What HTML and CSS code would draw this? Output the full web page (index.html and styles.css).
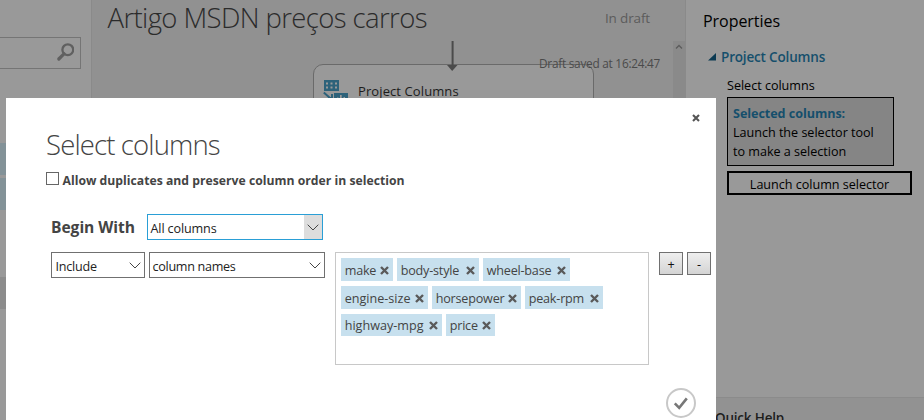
FILE: index.html
```html
<!DOCTYPE html>
<html lang="pt">
<head>
<meta charset="utf-8">
<title>Select columns</title>
<link rel="stylesheet" href="styles.css">
</head>
<body>
<div class="app">
  <aside class="modules">
    <div class="search">
      <svg width="19" height="19" viewBox="0 0 19 19"><circle cx="12.8" cy="6.700" r="5.400" fill="none" stroke="#606060" stroke-width="2.300"/><path d="M9 10.800 3.800 16" stroke="#606060" stroke-width="3.200" stroke-linecap="round"/></svg>
    </div>
    <div class="item blue"></div>
    <div class="item blue second"></div>
    <div class="item gray"></div>
  </aside>
  <main class="canvas">
    <header class="canvas-head">
      <h1 class="title">Artigo MSDN preços carros</h1>
      <span class="status">In draft</span>
    </header>
    <div class="graph">
      <div class="node">
        <svg class="node-icon" width="26" height="28" viewBox="0 0 26 28">
          <path fill="#2d627a" d="M1 0h15v11H1zM11 13h14v15H11z"/>
          <path fill="#999" d="M3 2.500h2v2H3zM7.500 2.500h2v2h-2zM12 2.500h2v2h-2zM3 6.500h2v2H3zM7.500 6.500h2v2h-2zM12 6.500h2v2h-2zM17 15h1.700v4H17zM14 17.500h1.500V21H14zM20.500 17H22v4h-1.500z"/>
          <path d="m.8 12.600 7 6.200M5 18h4v-4" stroke="#2d627a" stroke-width="2" fill="none"/>
        </svg>
        <span class="node-name">Project Columns</span>
      </div>
      <svg class="arrow" width="12" height="31" viewBox="0 0 12 31"><path d="M5.600 0v25" stroke="#4b4b4b" stroke-width="2"/><path d="M0 24h10.500L5.200 30z" fill="#4b4b4b"/></svg>
      <span class="saved">Draft saved at 16:24:47</span>
      <div class="scrollbar"><svg width="8" height="6" viewBox="0 0 8 6"><path d="m1 4.500 3-3 3 3" fill="none" stroke="#5c5c5c" stroke-width="1.300"/></svg></div>
    </div>
  </main>
  <aside class="props">
    <div class="props-body">
      <h2 class="props-title">Properties</h2>
      <div class="section"><svg width="8" height="8" viewBox="0 0 8 8"><path d="M8 0v7.500H0z" fill="#0b3a52"/></svg><span>Project Columns</span></div>
      <div class="field">
        <div class="label">Select columns</div>
        <div class="selected"><b>Selected columns:</b><br>Launch the selector tool<br>to make a selection</div>
        <div class="launch">Launch column selector</div>
      </div>
    </div>
    <div class="help">Quick Help</div>
  </aside>
</div>
<section class="dialog">
  <svg class="close" width="8" height="8" viewBox="0 0 8 8"><path d="m1 1 6 6M7 1 1 7" stroke="#555" stroke-width="2.100"/></svg>
  <h2 class="dialog-title">Select columns</h2>
  <div class="dup"><span class="checkbox"></span><span>Allow duplicates and preserve column order in selection</span></div>
  <div class="begin">
    <span class="begin-label">Begin With</span>
    <div class="select active"><span>All columns</span><i class="drop"><svg width="12" height="7" viewBox="0 0 12 7"><path d="m.7.7 5.300 5.300L11.300.7" fill="none" stroke="#444"/></svg></i></div>
  </div>
  <div class="rule">
    <div class="select narrow"><span>Include</span><i class="drop"><svg width="12" height="7" viewBox="0 0 12 7"><path d="m.7.7 5.300 5.300L11.300.7" fill="none" stroke="#444"/></svg></i></div>
    <div class="select names"><span>column names</span><i class="drop"><svg width="12" height="7" viewBox="0 0 12 7"><path d="m.7.7 5.300 5.300L11.300.7" fill="none" stroke="#444"/></svg></i></div>
    <div class="tags">
      <div class="line">
        <span class="tag w52">make<svg width="9" height="9" viewBox="0 0 9 9"><path d="m1 1 7 7M8 1 1 8"/></svg></span>
        <span class="tag w82">body-style<svg width="9" height="9" viewBox="0 0 9 9"><path d="m1 1 7 7M8 1 1 8"/></svg></span>
        <span class="tag w87">wheel-base<svg width="9" height="9" viewBox="0 0 9 9"><path d="m1 1 7 7M8 1 1 8"/></svg></span>
      </div>
      <div class="line">
        <span class="tag w87 wide">engine-size<svg width="9" height="9" viewBox="0 0 9 9"><path d="m1 1 7 7M8 1 1 8"/></svg></span>
        <span class="tag w89">horsepower<svg width="9" height="9" viewBox="0 0 9 9"><path d="m1 1 7 7M8 1 1 8"/></svg></span>
        <span class="tag w78">peak-rpm<svg width="9" height="9" viewBox="0 0 9 9"><path d="m1 1 7 7M8 1 1 8"/></svg></span>
      </div>
      <div class="line last">
        <span class="tag w101 wide">highway-mpg<svg width="9" height="9" viewBox="0 0 9 9"><path d="m1 1 7 7M8 1 1 8"/></svg></span>
        <span class="tag w49">price<svg width="9" height="9" viewBox="0 0 9 9"><path d="m1 1 7 7M8 1 1 8"/></svg></span>
      </div>
    </div>
    <div class="btn plus">+</div>
    <div class="btn">-</div>
  </div>
  <svg class="ok" width="30" height="30" viewBox="0 0 30 30"><circle cx="15" cy="15" r="14" fill="#fff" stroke="#c8c8c8" stroke-width="2"/><path d="m8.800 15.300 4.400 4.500 7.600-9.400" fill="none" stroke="#777" stroke-width="2.600"/></svg>
</section>
</body>
</html>
```
FILE: styles.css
```css
* { box-sizing: border-box; }
body { margin: 0; width: 924px; height: 420px; overflow: hidden; position: relative; font: 12.6px/19px "Open Sans", sans-serif; color: #000; background: #999; white-space: nowrap; }
h1, h2 { margin: 0; font-weight: 300; }
svg { display: block; flex: none; }
.app { display: flex; height: 420px; }

.modules { width: 91px; padding-top: 37px; background: #999; }
.search { width: 81px; height: 32px; border: 1px solid #757575; border-left: 0; padding: 5px 0 0 55px; margin-bottom: 74px; }
.item { width: 90px; height: 32px; }
.blue { background: #839298; }
.second { margin-top: 3px; }
.gray { background: #8c8c8c; margin-top: 67px; }

.canvas { width: 595px; background: #919191; border-left: 1px solid #8a8a8a; border-right: 1px solid #8a8a8a; }
.canvas-head { display: flex; height: 41px; padding-left: 15.5px; }
.title { width: 497.5px; font-size: 27.5px; line-height: 35px; letter-spacing: -.61px; color: #2b2b2b; }
.status { font-size: 13.5px; line-height: 36px; letter-spacing: -.15px; color: #5c5c5c; }
.graph { position: relative; height: 379px; }
.node { position: absolute; left: 221px; top: 23px; width: 281px; height: 60px; padding: 15px 0 0 9px; display: flex; border: 1px solid #6a6a6a; border-radius: 10px; background: #999; }
.node-name { margin-left: 9px; font-size: 13px; line-height: 22px; color: #1c1c1c; letter-spacing: .1px; }
.arrow { position: absolute; left: 355px; top: 0; }
.saved { position: absolute; left: 447px; top: 13px; font-size: 11.8px; letter-spacing: -.24px; color: #4a4a4a; }
.scrollbar { position: absolute; right: 0; top: 0; width: 12px; height: 379px; background: #8a8a8a; padding: 3px 0 0 2px; }

.props { width: 238px; background: #999; display: flex; flex-direction: column; }
.props-body { flex: none; height: 397px; padding: 7px 0 0 17px; }
.props-title { font-size: 16px; font-weight: 400; line-height: 28px; letter-spacing: -.05px; }
.section { display: flex; align-items: center; gap: 5px; margin: 12px 0 9px 5px; font-weight: 600; font-size: 13.5px; line-height: 20px; letter-spacing: -.17px; color: #154f6c; }
.field { padding-left: 24px; letter-spacing: -.02px; }
.label { line-height: 20px; margin-bottom: 1px; }
.selected { width: 167px; height: 69px; padding: 6px 5px; border: 1px solid #000; background: #858585; }
.selected b { color: #154f6c; letter-spacing: -.06px; }
.launch { margin-top: 5px; width: 185px; height: 24px; border: 2px solid #000; line-height: 23px; text-align: center; }
.help { flex: none; height: 40px; padding: 10px 0 0 29px; border-top: 1px solid #8b8b8b; background: #929292; font-weight: 600; font-size: 13.5px; line-height: 20px; letter-spacing: -.2px; color: #1d1d1d; }

.dialog { position: absolute; left: 6px; top: 98px; width: 710px; height: 330px; padding: 29px 0 0 40px; background: #fff; color: #444; }
.close { position: absolute; left: 686px; top: 16px; }
.dialog-title { font-size: 27.5px; line-height: 36px; letter-spacing: -.86px; color: #444; }
.dup { display: flex; align-items: center; gap: 3.500px; margin-top: 8px; height: 19px; font-weight: 700; font-size: 12.2px; line-height: 19px; letter-spacing: .015px; }
.checkbox { width: 13px; height: 13px; border: 1px solid #666; position: relative; top: -2px; }
.begin { display: flex; align-items: center; margin: 24px 0 12px 5px; height: 26px; }
.begin-label { width: 96px; font-weight: 700; font-size: 15.600px; letter-spacing: -.04px; }
.select { display: flex; width: 176px; height: 26px; padding-left: 2px; border: 1px solid #707070; background: #fff; color: #222; line-height: 27px; letter-spacing: -.13px; }
.select span { flex: 1; padding-left: .5px; }
.drop { display: flex; width: 18px; padding: 0 1px 0 0; align-items: center; justify-content: center; }
.active { border-color: #2a9fd6; }
.active .drop { background: #ddd; }
.rule { display: flex; align-items: flex-start; margin-left: 5px; }
.narrow { width: 94px; margin-right: 4px; padding-left: 3px; letter-spacing: -.25px; }
.names { margin-right: 10px; letter-spacing: -.3px; }
.tags { width: 314px; height: 113px; padding: 5px; border: 1px solid #c8c8c8; margin-right: 10px; }
.line { display: flex; gap: 4px; height: 23px; margin-bottom: 5px; }
.last { height: 22px; }
.tag { display: flex; align-items: center; justify-content: space-between; padding: 1px 4.500px 0 3.700px; background: #c7e0ee; letter-spacing: -.2px; }
.wide { letter-spacing: 0; }
.tag path { stroke: #5a5a5a; stroke-width: 2.400; }
.w49 { width: 49px; } .w52 { width: 52px; } .w78 { width: 78px; } .w82 { width: 82px; }
.w87 { width: 87px; } .w89 { width: 89px; } .w101 { width: 101px; }
.btn { width: 24px; height: 23px; border: 1px solid #707070; background: linear-gradient(#eee, #d4d4d4); color: #111; text-align: center; line-height: 23px; }
.plus { margin-right: 4px; }
.ok { position: absolute; left: 660px; top: 290px; }
```
